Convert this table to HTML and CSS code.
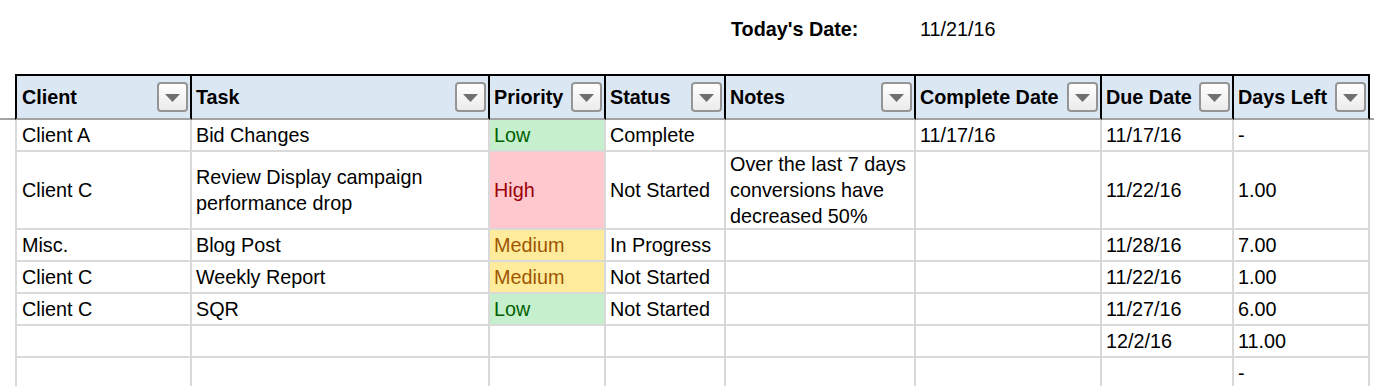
FILE: index.html
```html
<!DOCTYPE html>
<html lang="en">
<head>
<meta charset="utf-8">
<title>Task Tracker</title>
<link rel="stylesheet" href="styles.css">
</head>
<body>
<div class="sheet">
  <!-- top row -->
  <div class="t"></div><div class="t"></div><div class="t"></div><div class="t"></div><div class="t"></div>
  <div class="t label">Today's Date:</div><div class="t">11/21/16</div><div class="t"></div><div class="t"></div><div class="t"></div>

  <!-- header -->
  <div class="hg"></div>
  <div class="h first"><span>Client</span><span class="dd"><svg width="15" height="8" viewBox="0 0 15 8"><path d="M0 0H15L7.5 8Z" fill="#6f6f6f"/></svg></span></div>
  <div class="h"><span>Task</span><span class="dd"><svg width="15" height="8" viewBox="0 0 15 8"><path d="M0 0H15L7.5 8Z" fill="#6f6f6f"/></svg></span></div>
  <div class="h"><span>Priority</span><span class="dd"><svg width="15" height="8" viewBox="0 0 15 8"><path d="M0 0H15L7.5 8Z" fill="#6f6f6f"/></svg></span></div>
  <div class="h"><span>Status</span><span class="dd"><svg width="15" height="8" viewBox="0 0 15 8"><path d="M0 0H15L7.5 8Z" fill="#6f6f6f"/></svg></span></div>
  <div class="h"><span>Notes</span><span class="dd"><svg width="15" height="8" viewBox="0 0 15 8"><path d="M0 0H15L7.5 8Z" fill="#6f6f6f"/></svg></span></div>
  <div class="h"><span>Complete Date</span><span class="dd"><svg width="15" height="8" viewBox="0 0 15 8"><path d="M0 0H15L7.5 8Z" fill="#6f6f6f"/></svg></span></div>
  <div class="h"><span>Due Date</span><span class="dd"><svg width="15" height="8" viewBox="0 0 15 8"><path d="M0 0H15L7.5 8Z" fill="#6f6f6f"/></svg></span></div>
  <div class="h"><span>Days Left</span><span class="dd"><svg width="15" height="8" viewBox="0 0 15 8"><path d="M0 0H15L7.5 8Z" fill="#6f6f6f"/></svg></span></div>
  <div class="hg"></div>

  <!-- row 1 -->
  <div class="g"></div>
  <div class="c first">Client A</div>
  <div class="c">Bid Changes</div>
  <div class="c low">Low</div>
  <div class="c">Complete</div>
  <div class="c"></div>
  <div class="c">11/17/16</div>
  <div class="c">11/17/16</div>
  <div class="c">-</div>
  <div class="g"></div>

  <!-- row 2 -->
  <div class="g"></div>
  <div class="c first">Client C</div>
  <div class="c multi">Review Display campaign<br>performance drop</div>
  <div class="c high">High</div>
  <div class="c">Not Started</div>
  <div class="c multi">Over the last 7 days<br>conversions have<br>decreased 50%</div>
  <div class="c"></div>
  <div class="c">11/22/16</div>
  <div class="c">1.00</div>
  <div class="g"></div>

  <!-- row 3 -->
  <div class="g"></div>
  <div class="c first">Misc.</div>
  <div class="c">Blog Post</div>
  <div class="c med">Medium</div>
  <div class="c">In Progress</div>
  <div class="c"></div>
  <div class="c"></div>
  <div class="c">11/28/16</div>
  <div class="c">7.00</div>
  <div class="g"></div>

  <!-- row 4 -->
  <div class="g"></div>
  <div class="c first">Client C</div>
  <div class="c">Weekly Report</div>
  <div class="c med">Medium</div>
  <div class="c">Not Started</div>
  <div class="c"></div>
  <div class="c"></div>
  <div class="c">11/22/16</div>
  <div class="c">1.00</div>
  <div class="g"></div>

  <!-- row 5 -->
  <div class="g"></div>
  <div class="c first">Client C</div>
  <div class="c">SQR</div>
  <div class="c low">Low</div>
  <div class="c">Not Started</div>
  <div class="c"></div>
  <div class="c"></div>
  <div class="c">11/27/16</div>
  <div class="c">6.00</div>
  <div class="g"></div>

  <!-- row 6 -->
  <div class="g"></div>
  <div class="c first"></div>
  <div class="c"></div>
  <div class="c"></div>
  <div class="c"></div>
  <div class="c"></div>
  <div class="c"></div>
  <div class="c">12/2/16</div>
  <div class="c">11.00</div>
  <div class="g"></div>

  <!-- row 7 -->
  <div class="g"></div>
  <div class="c first"></div>
  <div class="c"></div>
  <div class="c"></div>
  <div class="c"></div>
  <div class="c"></div>
  <div class="c"></div>
  <div class="c"></div>
  <div class="c">-</div>
  <div class="g"></div>
</div>
</body>
</html>
```

FILE: styles.css
```css
html, body {
  margin: 0;
  padding: 0;
  background: #ffffff;
  overflow: hidden;
}

body {
  font-family: "Liberation Sans", Arial, Helvetica, sans-serif;
  font-size: 19.8px;
  color: #000000;
}

.sheet {
  display: grid;
  grid-template-columns: 15px 177px 298px 116px 120px 190px 186px 132px 136px 1fr;
  grid-template-rows: 74px 46px 32px 78px 32px 32px 32px 32px 32px;
  width: 1374px;
}

.sheet > div {
  box-sizing: border-box;
  min-width: 0;
  white-space: nowrap;
}

/* top "Today's Date" row */
.t {
  padding: 16px 0 0 4px;
  line-height: 26px;
}
.t.label {
  padding-left: 5px;
  font-weight: bold;
}

/* header row */
.hg {
  border-bottom: 2px solid #a3a3a3;
}

.h {
  display: flex;
  align-items: center;
  justify-content: space-between;
  padding: 0 2px 0 4px;
  background: #dce7f4;
  font-weight: bold;
  border-top: 2px solid #000000;
  border-right: 2px solid #000000;
  border-bottom: 2px solid #a3a3a3;
}
.h.first {
  border-left: 2px solid #000000;
  padding-left: 5px;
}

.dd {
  flex: none;
  display: flex;
  align-items: center;
  justify-content: center;
  width: 31px;
  height: 30px;
  box-sizing: border-box;
  border: 2px solid #959595;
  border-radius: 4px;
  background: linear-gradient(#ffffff, #ebebeb);
}
.dd svg {
  display: block;
  margin-top: 1px;
}

/* body cells */
.c {
  display: flex;
  align-items: center;
  padding-left: 4px;
  border-right: 2px solid #d9d9d9;
  border-bottom: 2px solid #d9d9d9;
}
.c.first {
  border-left: 2px solid #d9d9d9;
  padding-left: 5px;
}
.c.multi {
  line-height: 26px;
}

.low {
  background: #c6efce;
  color: #006100;
}
.high {
  background: #ffc7ce;
  color: #9c0006;
}
.med {
  background: #ffeb9c;
  color: #9c5700;
}
```
